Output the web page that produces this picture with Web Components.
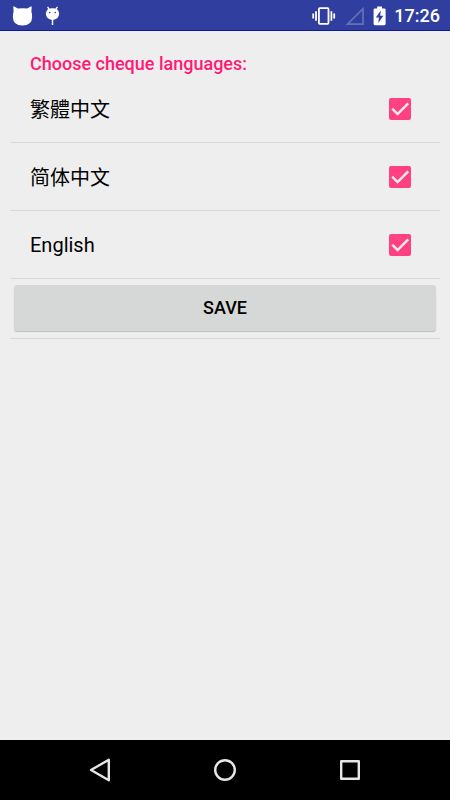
<!DOCTYPE html>
<html lang="en">
<head>
<meta charset="utf-8">
<meta name="viewport" content="width=device-width, initial-scale=1">
<title>Cheque languages</title>
<style>
html, body { height: 100%; margin: 0; }
body { font-family: Roboto, "Noto Sans CJK SC", sans-serif; background: #eee; color: #000; }
</style>
</head>
<body>
<app-screen>
  <status-bar slot="top" time="17:26"></status-bar>
  <language-form heading="Choose cheque languages:">
    <language-option lang="zh-Hant">繁體中文</language-option>
    <language-option lang="zh-Hans">简体中文</language-option>
    <language-option lang="en">English</language-option>
    <save-button slot="action">SAVE</save-button>
  </language-form>
  <nav-bar slot="bottom"></nav-bar>
</app-screen>
<script>
function define(name, html, setup) {
  const template = document.createElement('template');
  template.innerHTML = html;
  customElements.define(name, class extends HTMLElement {
    constructor() {
      super();
      this.attachShadow({ mode: 'open' }).append(template.content.cloneNode(true));
    }
    connectedCallback() {
      if (setup) setup(this, this.shadowRoot);
    }
  });
}

define('app-screen', `
<style>
:host { display: flex; flex-direction: column; min-height: 100vh; }
main { flex: 1; padding: 0 10px; }
</style>
<slot name="top"></slot>
<main><slot></slot></main>
<slot name="bottom"></slot>`);

define('status-bar', `
<style>
:host { display: block; background: #303f9f; border-bottom: 1px solid #0a1a9a; color: #fff; }
header { display: flex; align-items: center; justify-content: space-between; height: 30px; padding: 0 10px 0 12px; }
div { display: flex; align-items: center; gap: 8px; padding-top: 2px; }
.notifications { gap: 10px; }
svg { display: block; }
time { font-size: 18px; line-height: 20px; font-weight: 500; }
</style>
<header>
  <div class="notifications">
    <svg width="21" height="20" viewBox="0 0 21 20" fill="#fff" aria-label="Cat notification"><path d="M2.2 0.4Q1.3 0 1.3 1.4L1.6 5.6Q0.8 8 0.9 11Q1 19.6 10.5 19.6Q20 19.6 20.1 11Q20.2 8 19.4 5.6L19.7 1.4Q19.7 0 18.8 0.4L15.2 2.6Q10.5 1.9 5.8 2.6Z"/></svg>
    <svg width="20" height="20" viewBox="0 0 20 20" aria-label="Debugging"><path d="M4.6 .8L6.6 4.2M14.4 .8L12.4 4.2" stroke="#fff" stroke-width="1.3"/><path d="M2.9 7.6Q3.1 2.2 9.5 2.2T16.1 7.6Q16.1 13.6 9.5 14Q2.9 13.6 2.9 7.6Z" fill="#fff"/><path d="M8.8 13h1.4v6H8.8z" fill="#fff"/><circle cx="6.8" cy="6.6" r=".8" fill="#303f9f"/><circle cx="12.2" cy="6.6" r=".8" fill="#303f9f"/></svg>
  </div>
  <div>
    <svg width="24" height="20" viewBox="0 0 24 20" fill="none" stroke="#fff" stroke-width="1.8" aria-label="Vibrate"><rect x="6.9" y="2.2" width="9.6" height="15.6" rx="1"/><path d="M4 5.2v9.6M19.4 5.2v9.6M1.2 7.4v5.2M22.2 7.4v5.2"/></svg>
    <svg width="20" height="20" viewBox="0 0 20 20" fill="none" stroke="#6670b8" stroke-width="1.7" aria-label="No signal"><path d="M3.5 18.2H19V2.7Z"/></svg>
    <svg width="14" height="20" viewBox="0 0 14 20" aria-label="Charging"><path d="M5.2 .4h4.8v2.1h2.3q1.3 0 1.3 1.3v14q0 1.4-1.3 1.4H2.9q-1.3 0-1.3-1.4V3.8q0-1.3 1.3-1.3h2.3Z" fill="#fff"/><path d="M8.8 4.6L3.8 11.4H6.9L6.3 17L11.4 9.7H8.2Z" fill="#303f9f"/></svg>
    <time></time>
  </div>
</header>`, (host, root) => {
  root.querySelector('time').textContent = host.getAttribute('time');
});

define('language-form', `
<style>
:host { display: block; }
h1 { margin: 0; padding: 23px 20px 1px; font-size: 18px; line-height: 20px; font-weight: 500; color: #ff1a75; }
.action { padding: 6px 4px; border-bottom: 1px solid #d9d9d9; }
</style>
<form>
  <h1></h1>
  <slot></slot>
  <div class="action"><slot name="action"></slot></div>
</form>`, (host, root) => {
  root.querySelector('h1').textContent = host.getAttribute('heading');
});

define('language-option', `
<style>
:host { display: block; border-bottom: 1px solid #d9d9d9; }
:host(:lang(zh-Hant)) { font-family: "Noto Sans CJK TC", sans-serif; }
:host(:lang(zh-Hans)) { font-family: "Noto Sans CJK SC", sans-serif; }
label { display: flex; align-items: center; justify-content: space-between; height: 67px; padding: 0 28px 0 20px; font-size: 20px; line-height: 24px; }
.box { display: grid; width: 24px; height: 24px; }
input, svg { grid-area: 1 / 1; margin: 0; width: 24px; height: 24px; }
input { appearance: none; border: 1px solid transparent; border-radius: 3px; background: #aaa padding-box; }
input:checked { background-color: #ff4081; }
svg { pointer-events: none; visibility: hidden; }
input:checked + svg { visibility: visible; }
</style>
<label>
  <span><slot></slot></span>
  <span class="box">
    <input type="checkbox" checked>
    <svg viewBox="0 0 24 24" fill="none" stroke="#eee" stroke-width="2.4" aria-hidden="true"><path d="M4.2 11.6L9.6 17L20.2 6.4"/></svg>
  </span>
</label>`, (host, root) => {
  root.querySelector('input').setAttribute('aria-label', host.textContent);
});

define('save-button', `
<style>
:host { display: block; }
button { display: block; width: 100%; height: 46px; margin: 0 0 1px; padding: 0; border: 0; border-radius: 3px; background: #d6d8d7; color: #000; font: 500 18px/20px Roboto, sans-serif; box-shadow: 0 1px 1px rgba(0, 0, 0, .2); }
</style>
<button type="button"><slot></slot></button>`);

define('nav-bar', `
<style>
:host { display: block; background: #000; }
nav { display: flex; justify-content: center; align-items: center; height: 60px; gap: 77px; }
button { width: 48px; height: 48px; padding: 0; border: 0; background: none; display: grid; place-items: center; }
svg { display: block; fill: none; stroke: #e6e6e6; stroke-width: 2.4; stroke-linejoin: round; }
</style>
<nav>
  <button type="button" aria-label="Back"><svg width="24" height="24" viewBox="0 0 24 24"><path d="M3 12L20.8 1.8V22.2Z"/></svg></button>
  <button type="button" aria-label="Home"><svg width="24" height="24" viewBox="0 0 24 24"><circle cx="12" cy="12" r="9.8"/></svg></button>
  <button type="button" aria-label="Recent apps"><svg width="24" height="24" viewBox="0 0 24 24"><rect x="3.2" y="3.2" width="17.6" height="17.6"/></svg></button>
</nav>`);
</script>
</body>
</html>
